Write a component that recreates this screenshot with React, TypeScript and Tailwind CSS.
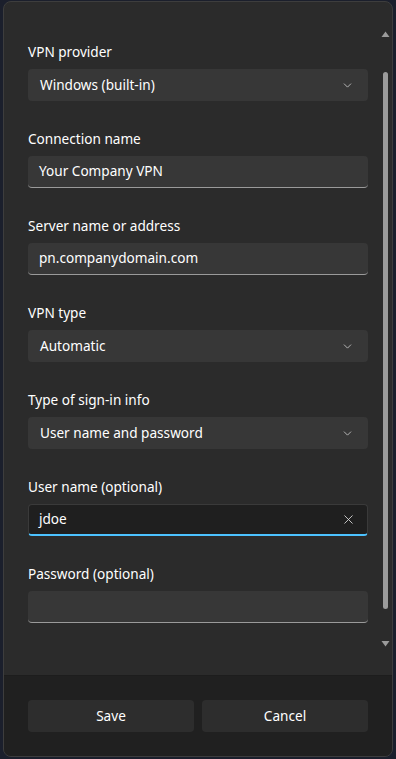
import { ChevronDown, X } from "lucide-react";

type Field = {
  label: string;
  value?: string;
  kind: "select" | "text" | "focused";
};

const fields: Field[] = [
  { label: "VPN provider", value: "Windows (built-in)", kind: "select" },
  { label: "Connection name", value: "Your Company VPN", kind: "text" },
  { label: "Server name or address", value: "pn.companydomain.com", kind: "text" },
  { label: "VPN type", value: "Automatic", kind: "select" },
  { label: "Type of sign-in info", value: "User name and password", kind: "select" },
  { label: "User name (optional)", value: "jdoe", kind: "focused" },
  { label: "Password (optional)", value: "", kind: "text" },
];

function Row({ f }: { f: Field }) {
  return (
    <div className="flex flex-col">
      <span className="h-[20px] leading-[20px] text-[13.6px] text-white">{f.label}</span>
      {f.kind === "select" && (
        <div className="mt-[7px] flex h-[32px] items-center justify-between rounded-[4px] bg-[#373737] pl-[12px] pr-[14px]">
          <span className="text-[13.6px] text-white">{f.value}</span>
          <ChevronDown size={13} strokeWidth={1.5} className="text-[#cfcfcf]" />
        </div>
      )}
      {f.kind === "text" && (
        <div className="mt-[7px] flex h-[32px] items-center rounded-[4px] border-b border-[#9a9a9a] bg-[#373737] pl-[11px]">
          <span className="text-[13.6px] text-white">{f.value}</span>
        </div>
      )}
      {f.kind === "focused" && (
        <div className="mt-[7px] flex h-[32px] items-center justify-between rounded-[4px] border border-b-2 border-[#3a3a3a] border-b-[#4cc2ff] bg-[#1f1f1f] pl-[10px] pr-[11px]">
          <span className="text-[13.6px] text-white">{f.value}</span>
          <X size={15} strokeWidth={1.4} className="text-[#d8d8d8]" />
        </div>
      )}
    </div>
  );
}

export default function App() {
  return (
    <div
      className="h-[759px] w-[396px] bg-[#1b1f2c] pl-[3px] pt-[1px]"
      style={{ fontFamily: '"Segoe UI", "Noto Sans", sans-serif' }}
    >
      <div className="flex h-[756px] w-[390px] flex-col overflow-hidden rounded-[8px] border border-[#3d3d3d] bg-[#2b2b2b]">
        <div className="relative flex-1">
          <div className="flex flex-col gap-[28px] pl-[24px] pr-[24px] pt-[40px]">
            {fields.map((f) => (
              <Row key={f.label} f={f} />
            ))}
          </div>
          {/* scrollbar */}
          <div className="absolute right-[2px] top-[29px] flex w-[9px] flex-col items-center">
            <svg width="9" height="7" viewBox="0 0 9 7">
              <path d="M4.5 0.5 L8.5 6 L0.5 6 Z" fill="#9b9b9b" />
            </svg>
          </div>
          <div className="absolute right-[4px] top-[70px] h-[537px] w-[5px] rounded-full bg-[#9b9b9b]" />
          <div className="absolute right-[2px] top-[638px] flex w-[9px] flex-col items-center">
            <svg width="9" height="7" viewBox="0 0 9 7">
              <path d="M0.5 1 L8.5 1 L4.5 6.5 Z" fill="#9b9b9b" />
            </svg>
          </div>
        </div>
        <div className="flex h-[81px] gap-[8px] border-t border-[#1d1d1d] bg-[#202020] px-[24px] pt-[24px]">
          <button className="h-[32px] flex-1 rounded-[4px] bg-[#2d2d2d] text-[13.6px] text-white">
            Save
          </button>
          <button className="h-[32px] flex-1 rounded-[4px] bg-[#2d2d2d] text-[13.6px] text-white">
            Cancel
          </button>
        </div>
      </div>
    </div>
  );
}
